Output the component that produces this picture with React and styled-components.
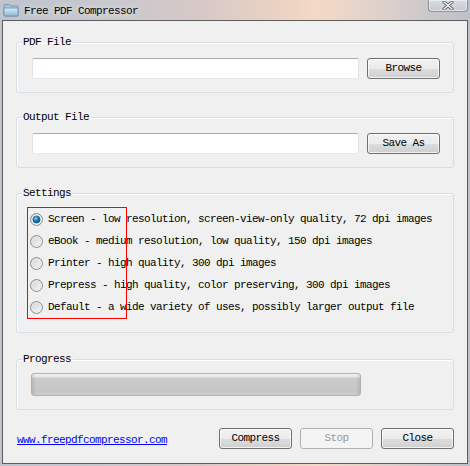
import React from 'react';
import styled, { createGlobalStyle } from 'styled-components';

const mono = `"Liberation Mono", "DejaVu Sans Mono", monospace`;

const GlobalStyle = createGlobalStyle`
  html, body { margin: 0; padding: 0; }
  body { width: 470px; height: 466px; overflow: hidden; background: #4a3a3c; }
`;

const Window = styled.div`
  width: 470px;
  height: 466px;
  display: flex;
  flex-direction: column;
  background: linear-gradient(90deg, #bfc4cd 0%, #c8c8ce 22%, #d6c8c7 42%, #eed4c3 62%, #f3d9c6 68%, #dcd0cb 82%, #bcc0c8 100%);
  font-family: ${mono};
  font-size: 11px;
  letter-spacing: -0.6px;
  color: #000;
`;

const TitleBar = styled.div`
  height: 20px;
  display: flex;
  align-items: center;
  padding-left: 3px;
  flex-shrink: 0;
`;

const Title = styled.span`
  margin-left: 5px;
  margin-top: 1px;
  text-shadow: 0 0 6px rgba(255, 255, 255, 0.9);
`;

const CloseBtn = styled.div`
  margin-left: auto;
  margin-right: 2px;
  align-self: flex-start;
  width: 40px;
  height: 12px;
  box-sizing: border-box;
  border: 1px solid rgba(90, 90, 100, 0.55);
  border-top: none;
  border-radius: 0 0 4px 4px;
  background: linear-gradient(#d8dce2, #c6cad2);
  box-shadow: inset 0 0 0 1px rgba(255, 255, 255, 0.45);
  display: flex;
  align-items: center;
  justify-content: center;
`;

const Client = styled.div`
  margin: 0 2px;
  height: 444px;
  box-sizing: border-box;
  border: 1px solid #5d5d5d;
  background: #f0f0f0;
  display: flex;
  flex-direction: column;
  padding: 15px 13px 0;
`;

const Group = styled.fieldset`
  margin: ${p => p.$top || 0}px 0 0;
  padding: ${p => p.$pt}px 13px ${p => p.$pb}px 5px;
  border: 1px solid #d5dfe5;
  border-radius: 3px;
  min-inline-size: 0;
  box-shadow: inset 1px 1px 0 #fff;
`;

const Legend = styled.legend`
  padding: 0 2px 0 1px;
  line-height: 13px;
  height: 13px;
`;

const Body = styled.div`
  padding-left: ${p => p.$indent}px;
`;

const FileRow = styled.div`
  display: flex;
  align-items: center;
  gap: 8px;
`;

const TextInput = styled.input`
  width: 328px;
  height: 21px;
  box-sizing: border-box;
  margin: 0;
  border: 1px solid;
  border-color: #abadb3 #e2e3ea #e3e9ef #e2e3ea;
  border-radius: 2px;
  background: #fff;
  font-family: ${mono};
  font-size: 11px;
  outline: none;
`;

const Button = styled.button`
  width: 73px;
  height: 21px;
  margin: 0;
  padding: 0;
  box-sizing: border-box;
  border: 1px solid ${p => (p.disabled ? '#adb2b5' : '#707070')};
  border-radius: 3px;
  background: ${p =>
    p.disabled
      ? '#f4f4f4'
      : 'linear-gradient(#f2f2f2 0%, #ebebeb 50%, #dddddd 51%, #cfcfcf 100%)'};
  box-shadow: ${p => (p.disabled ? 'none' : 'inset 0 0 0 1px rgba(255,255,255,0.7)')};
  color: ${p => (p.disabled ? '#9a9a9a' : '#000')};
  font-family: ${mono};
  font-size: 11px;
  letter-spacing: -0.6px;
  line-height: 19px;
`;

const RadioList = styled.div`
  position: relative;
  display: flex;
  flex-direction: column;
`;

const RadioRow = styled.label`
  height: 22px;
  display: flex;
  align-items: center;
  gap: 5px;
  white-space: nowrap;
`;

const Highlight = styled.div`
  position: absolute;
  left: -3px;
  top: -1px;
  width: 100px;
  height: 112px;
  box-sizing: border-box;
  border: 1px solid #ff0000;
  pointer-events: none;
`;

const ProgressTrack = styled.div`
  width: 330px;
  height: 23px;
  box-sizing: border-box;
  border: 1px solid #b2b2b2;
  border-radius: 3px;
  background: linear-gradient(#f3f3f3 0%, #e6e6e6 12%, #cacaca 22%, #c6c6c6 80%, #cdcdcd 100%);
  box-shadow: inset 4px 0 3px -2px rgba(0, 0, 0, 0.08), inset -4px 0 3px -2px rgba(0, 0, 0, 0.08);
`;

const Footer = styled.div`
  margin-top: 18px;
  padding: 0 0 0 1px;
  display: flex;
  align-items: center;
  gap: 8px;
`;

const Link = styled.a`
  color: #0000ff;
  text-decoration: underline;
  margin-right: auto;
  margin-top: 2px;
`;

const FolderIcon = () => (
  <svg width="16" height="14" viewBox="0 0 16 14">
    <defs>
      <linearGradient id="fb" x1="0" y1="0" x2="0" y2="1">
        <stop offset="0" stopColor="#d9ecf8" />
        <stop offset="1" stopColor="#8db6d4" />
      </linearGradient>
    </defs>
    <path d="M1 2.5 Q1 1.5 2 1.5 H6 L7.5 3 H14 Q15 3 15 4 V12 Q15 13 14 13 H2 Q1 13 1 12 Z" fill="#a7c6dd" stroke="#6b8ea8" strokeWidth="0.8" />
    <path d="M1 5 H15 V12 Q15 13 14 13 H2 Q1 13 1 12 Z" fill="url(#fb)" stroke="#6b8ea8" strokeWidth="0.8" />
  </svg>
);

const CloseGlyph = () => (
  <svg width="12" height="9" viewBox="0 0 12 9">
    <path d="M2 1 L10 8 M10 1 L2 8" stroke="#555a64" strokeWidth="3" strokeLinecap="round" />
    <path d="M2 1 L10 8 M10 1 L2 8" stroke="#f4f5f7" strokeWidth="1.4" strokeLinecap="round" />
  </svg>
);

const RadioMark = ({ checked }) => (
  <svg width="13" height="13" viewBox="0 0 13 13">
    <defs>
      <linearGradient id="rb" x1="0" y1="0" x2="1" y2="1">
        <stop offset="0" stopColor="#cfcfcf" />
        <stop offset="1" stopColor="#fbfbfb" />
      </linearGradient>
      <radialGradient id="rd" cx="0.4" cy="0.35" r="0.7">
        <stop offset="0" stopColor="#8fd8ff" />
        <stop offset="0.45" stopColor="#1f7fc0" />
        <stop offset="1" stopColor="#083f70" />
      </radialGradient>
    </defs>
    <circle cx="6.5" cy="6.5" r="6" fill="url(#rb)" stroke="#8b8f94" strokeWidth="1" />
    <circle cx="6.5" cy="6.5" r="4.5" fill="none" stroke="#e8e8e8" strokeWidth="1" />
    {checked && <circle cx="6.5" cy="6.5" r="3.6" fill="url(#rd)" stroke="#1d5f91" strokeWidth="0.6" />}
  </svg>
);

const presets = [
  'Screen - low resolution, screen-view-only quality, 72 dpi images',
  'eBook - medium resolution, low quality, 150 dpi images',
  'Printer - high quality, 300 dpi images',
  'Prepress - high quality, color preserving, 300 dpi images',
  'Default - a wide variety of uses, possibly larger output file',
];

const App = () => (
  <Window>
    <GlobalStyle />
    <TitleBar>
      <FolderIcon />
      <Title>Free PDF Compressor</Title>
      <CloseBtn>
        <CloseGlyph />
      </CloseBtn>
    </TitleBar>
    <Client>
      <Group $pt={9} $pb={13}>
        <Legend>PDF File</Legend>
        <Body $indent={10}>
          <FileRow>
            <TextInput />
            <Button>Browse</Button>
          </FileRow>
        </Body>
      </Group>
      <Group $top={18} $pt={9} $pb={13}>
        <Legend>Output File</Legend>
        <Body $indent={10}>
          <FileRow>
            <TextInput />
            <Button>Save As</Button>
          </FileRow>
        </Body>
      </Group>
      <Group $top={19} $pt={8} $pb={14}>
        <Legend>Settings</Legend>
        <Body $indent={8}>
          <RadioList>
            {presets.map((p, i) => (
              <RadioRow key={p}>
                <RadioMark checked={i === 0} />
                <span>{p}</span>
              </RadioRow>
            ))}
            <Highlight />
          </RadioList>
        </Body>
      </Group>
      <Group $top={20} $pt={7} $pb={13}>
        <Legend>Progress</Legend>
        <Body $indent={9}>
          <ProgressTrack />
        </Body>
      </Group>
      <Footer>
        <Link href="#">www.freepdfcompressor.com</Link>
        <Button>Compress</Button>
        <Button disabled>Stop</Button>
        <Button>Close</Button>
      </Footer>
    </Client>
  </Window>
);

export default App;
